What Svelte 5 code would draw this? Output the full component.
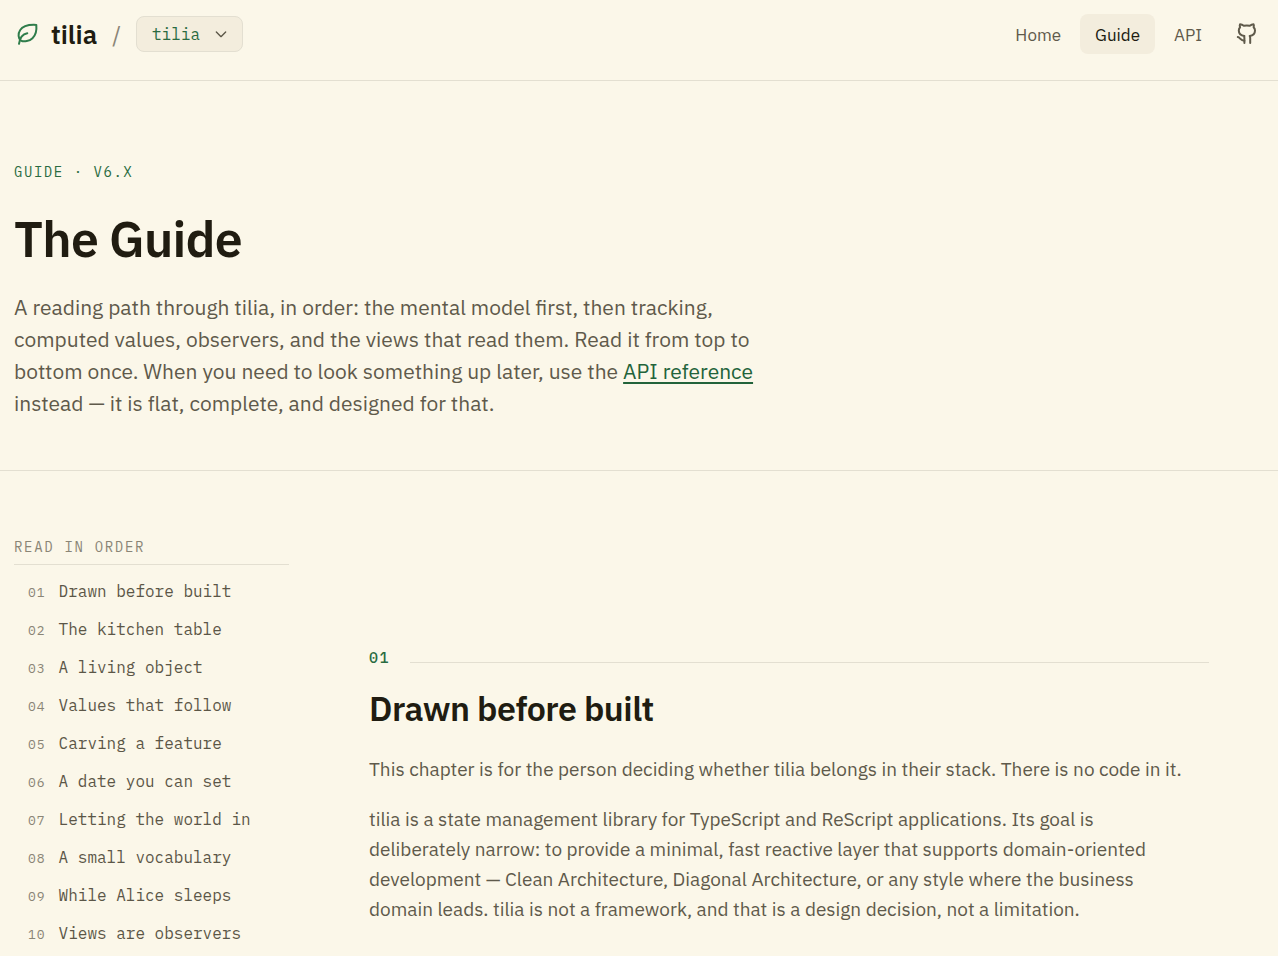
<script>
  const chapters = [
    'Drawn before built', 'The kitchen table', 'A living object', 'Values that follow', 'Carving a feature',
    'A date you can set', 'Letting the world in', 'A small vocabulary', 'While Alice sleeps', 'Views are observers'
  ];
</script>

<header class="bar">
  <div class="brand">
    <a class="logo" href="#top">
      <svg width="24" height="24" viewBox="0 0 24 24" aria-hidden="true"><path d="M20.3 2.9C20.8 8 19.8 13.2 16.5 16.2C13.5 19.1 8 20.2 5 18.6C2 16.5 1.9 11.5 4.2 8C7 3.5 12.5 2.5 20.3 2.9Z" /><path d="M3 21.8C3.6 17 5.5 12.5 11.3 11.3" /></svg>
      <span>tilia</span>
    </a>
    <span class="slash">/</span>
    <button class="picker" type="button">tilia
      <svg width="16" height="16" viewBox="0 0 24 24" aria-hidden="true"><path d="m5 9 7 7 7-7" /></svg>
    </button>
  </div>
  <nav class="links">
    <a href="#home">Home</a>
    <a class="active" href="#guide">Guide</a>
    <a href="#api">API</a>
    <a class="git" href="#github" aria-label="GitHub">
      <svg width="22" height="22" viewBox="0 0 22 22" aria-hidden="true"><path d="M8.4 20V15C8.2 14.2 8.2 13.6 8.4 13C4.8 12.6 2.8 10.6 2.8 7.6C2.8 6.2 3.2 5.1 4.1 4.2C3.6 3.2 3.6 2.2 4 1.3C5.5 1.4 6.8 2 7.8 2.8C9.8 2.3 11.8 2.3 13.8 2.8C14.8 2 16 1.4 17.6 1.3C18 2.2 18 3.2 17.6 4.2C18.5 5.1 19 6.2 19 7.6C19 10.6 17 12.6 13.7 13C14.1 13.7 14.2 14.3 14.2 15V20" /><path d="M1.8 14C4.2 14.3 4.4 17.8 8.4 17.7" /></svg>
    </a>
  </nav>
</header>

<section class="hero" id="top">
  <p class="eyebrow">GUIDE · V6.X</p>
  <h1>The Guide</h1>
  <p class="intro">A reading path through tilia, in order: the mental model first, then tracking, computed values, observers, and the views that read them. Read it from top to bottom once. When you need to look something up later, use the <a href="#api">API reference</a> instead — it is flat, complete, and designed for that.</p>
</section>

<main class="content">
  <aside>
    <h2 class="toc-title">READ IN ORDER</h2>
    <ol>
      {#each chapters as chapter, i}
        <li><a href="#chapter-{i + 1}"><span class="num">{String(i + 1).padStart(2, '0')}</span><span>{chapter}</span></a></li>
      {/each}
    </ol>
  </aside>
  <article id="chapter-1">
    <div class="marker"><span>01</span></div>
    <h2>Drawn before built</h2>
    <p>This chapter is for the person deciding whether tilia belongs in their stack. There is no code in it.</p>
    <p>tilia is a state management library for TypeScript and ReScript applications. Its goal is deliberately narrow: to provide a minimal, fast reactive layer that supports domain-oriented development — Clean Architecture, Diagonal Architecture, or any style where the business domain leads. tilia is not a framework, and that is a design decision, not a limitation.</p>
  </article>
</main>

<style>
  :global(body) {
    margin: 0;
    background: #fbf7e9;
    color: #201c11;
    font-family: "IBM Plex Sans", "Noto Sans", sans-serif;
  }
  * { box-sizing: border-box; }
  a { color: inherit; text-decoration: none; }
  h1, h2, p, ol { margin: 0; padding: 0; }
  svg { flex: none; fill: none; stroke: currentColor; stroke-width: 2; stroke-linecap: round; stroke-linejoin: round; }
  .bar {
    display: flex;
    align-items: flex-start;
    justify-content: space-between;
    padding: 14px 14px 26px;
    border-bottom: 1px solid #e3dfd1;
  }
  .brand { display: flex; align-items: center; height: 40px; }
  .logo { display: flex; align-items: center; gap: 11px; padding-left: 2px; font-size: 26px; line-height: 40px; font-weight: 600; }
  .logo svg { color: #2f7d4b; }
  .slash { margin: 0 15px; font-size: 23px; color: #8a8576; }
  .picker {
    display: flex;
    align-items: center;
    gap: 13px;
    height: 36px;
    padding: 0 13px 0 15px;
    border: 1px solid #e3dfd1;
    border-radius: 8px;
    background: #f3eddd;
    color: #2a6b41;
    font: 16px/24px "IBM Plex Mono", "Liberation Mono", monospace;
  }
  .picker svg { color: #5b5647; }
  .links { display: flex; align-items: center; gap: 4px; font-size: 17px; color: #5f5a4b; }
  .links a { display: flex; align-items: center; height: 40px; padding: 1px 15px 0; border-radius: 8px; }
  .links .active { background: #f3eddd; color: #201c11; }
  .links .git { padding: 0 6px 0 15px; }
  .hero { padding: 81px 14px 51px; border-bottom: 1px solid #e3dfd1; }
  .eyebrow { font: 14px/20px "IBM Plex Mono", "Liberation Mono", monospace; letter-spacing: 0.11em; color: #2a6b41; }
  h1 { margin-top: 29px; font-size: 50px; line-height: 56px; font-weight: 600; letter-spacing: -0.015em; }
  .intro { max-width: 760px; margin-top: 24px; font-size: 21px; line-height: 32px; color: #5f5a4b; }
  .intro a { color: #22633a; text-decoration: underline; text-decoration-thickness: 2px; text-underline-offset: 3px; }
  .content { display: grid; grid-template-columns: 275px minmax(0, 840px); gap: 80px; padding: 66px 14px 0; }
  .toc-title { padding-bottom: 7px; border-bottom: 1px solid #e3dfd1; font: 14px/20px "IBM Plex Mono", "Liberation Mono", monospace; letter-spacing: 0.12em; color: #8a8576; }
  ol { list-style: none; padding: 7px 14px; }
  li a { display: flex; align-items: baseline; gap: 13px; padding: 7px 0; font: 16px/24px "IBM Plex Mono", "Liberation Mono", monospace; color: #5b5647; }
  .num { font-size: 13px; line-height: 16px; letter-spacing: 1px; color: #8a8576; }
  article { padding-top: 111px; }
  .marker { display: flex; align-items: baseline; gap: 20px; font: 500 15px/20px "IBM Plex Mono", "Liberation Mono", monospace; letter-spacing: 0.1em; color: #2a6b41; }
  .marker::after { content: ""; flex: 1; border-top: 1px solid #e3dfd1; }
  article h2 { margin: 20px 0 26px; font-size: 34px; line-height: 40px; font-weight: 600; letter-spacing: -0.015em; }
  article p { max-width: 820px; margin-bottom: 20px; font-size: 19px; line-height: 30px; color: #5f5a4b; }
</style>
